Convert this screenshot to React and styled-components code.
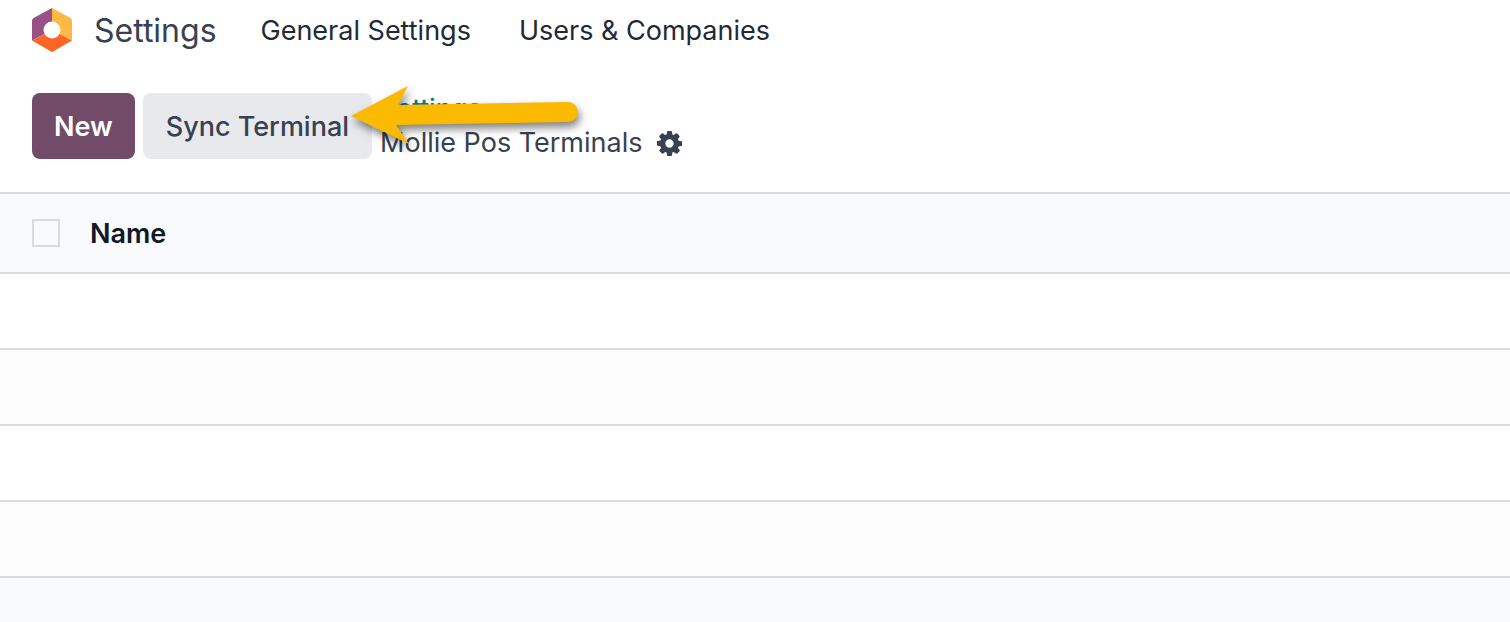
import styled, { createGlobalStyle } from "styled-components";
import { useState } from "react";

const ROWS = [1, 2, 3, 4];

export default function App() {
    const [checked, setChecked] = useState(false);

    return (
        <Page>
            <GlobalStyle />
            <Navbar>
                <Brand href="#settings">
                    <Logo />
                    Settings
                </Brand>
                <Menu>
                    <NavLink href="#general">General Settings</NavLink>
                    <NavLink href="#users">Users &amp; Companies</NavLink>
                </Menu>
            </Navbar>
            <ControlPanel>
                <Button $primary>New</Button>
                <Button>Sync Terminal</Button>
                <Breadcrumb>
                    <BackLink href="#settings">Settings</BackLink>
                    <Current>
                        Mollie Pos Terminals
                        <CogButton aria-label="Actions"><Cog /></CogButton>
                    </Current>
                    <Arrow />
                </Breadcrumb>
            </ControlPanel>
            <List>
                <thead>
                    <tr>
                        <SelectHead>
                            <Checkbox
                                type="checkbox"
                                aria-label="Select all"
                                checked={checked}
                                onChange={(e) => { setChecked(e.target.checked) }}
                            />
                        </SelectHead>
                        <NameHead>Name</NameHead>
                    </tr>
                </thead>
                <tbody>
                    {ROWS.map((row) => (
                        <Row key={row}>
                            <td></td>
                            <td></td>
                        </Row>
                    ))}
                </tbody>
            </List>
        </Page>
    );
}

function Logo() {
    return (
        <svg width="40" height="44" viewBox="0 0 40 44" aria-hidden="true">
            <path d="M20 0L1.500 10Q0 11 0 12.500V32.500L20 22Z" fill="#985184" />
            <path d="M20 0L38.500 10Q40 11 40 12.500V32.500L20 22Z" fill="#fbb945" />
            <path d="M0 32.500L20 22L40 32.500L21.500 43.300Q20 44.300 18.500 43.300Z" fill="#fc6526" />
            <circle cx="20" cy="22" r="8.500" fill="#fff" />
        </svg>
    );
}

function Cog() {
    return (
        <svg width="25" height="25" viewBox="0 128 1536 1536" fill="currentColor" aria-hidden="true">
            <path d="M1024 896q0-106-75-181t-181-75-181 75-75 181 75 181 181 75 181-75 75-181zm512-109v222q0 12-8 23t-20 13l-185 28q-19 54-39 91 35 50 107 138 10 12 10 25t-9 23q-27 37-99 108t-94 71q-12 0-26-9l-138-108q-44 23-91 38-16 136-29 186-7 28-36 28h-222q-14 0-24.500-8.500t-11.500-21.500l-28-184q-49-16-90-37l-141 107q-10 9-25 9-14 0-25-11-126-114-165-168-7-10-7-23 0-12 8-23 15-21 51-66.500t54-70.500q-27-50-41-99l-183-27q-13-2-21-12.500t-8-23.500v-222q0-12 8-23t19-13l186-28q14-46 39-92-40-57-107-138-10-12-10-24 0-10 9-23 26-36 98.500-107.500t94.500-71.500q13 0 26 10l138 107q44-23 91-38 16-136 29-186 7-28 36-28h222q14 0 24.500 8.500t11.500 21.500l28 184q49 16 90 37l142-107q9-9 24-9 13 0 25 10 129 119 165 170 7 8 7 22 0 12-8 23-15 21-51 66.500t-54 70.500q26 50 41 98l183 28q13 2 21 12.500t8 23.500z" />
        </svg>
    );
}

function Arrow() {
    return (
        <ArrowSvg width="250" height="84" viewBox="0 0 250 84" aria-hidden="true">
            <path
                d="M11 40L68 10L58 29L228 26A10 10 0 0 1 228 46L56 49L69 68Z"
                fill="#fbb900"
            />
        </ArrowSvg>
    );
}

const GlobalStyle = createGlobalStyle`
    * {
        box-sizing: border-box;
    }

    body {
        margin: 0;
        background: #f9fafc;
        font-family: Inter, 'Liberation Sans', sans-serif;
        font-size: 27px;
        color: #1f2937;
    }

    a {
        color: inherit;
        text-decoration: none;
    }
`;

const Page = styled.div`
    background: #fff;
`;

const Navbar = styled.nav`
    display: flex;
    align-items: center;
    height: 60px;
    padding: 0 32px;
    gap: 44px;
`;

const Brand = styled.a`
    display: flex;
    align-items: center;
    gap: 22px;
    font-size: 32px;
    && {
        color: #374151;
    }
`;

const Menu = styled.div`
    display: flex;
    gap: 48px;
`;

const NavLink = styled.a`
    white-space: nowrap;
`;

const ControlPanel = styled.div`
    display: flex;
    align-items: center;
    gap: 8px;
    height: 132px;
    padding: 0 32px;
`;

const Button = styled.button`
    height: 66px;
    padding: 0 ${(props) => (props.$primary ? "22px" : "23px")};
    border: none;
    border-radius: 8px;
    background: ${(props) => (props.$primary ? "#714b67" : "#e7e9ed")};
    color: ${(props) => (props.$primary ? "#fff" : "#374151")};
    font-family: inherit;
    font-size: 27px;
    font-weight: ${(props) => (props.$primary ? 600 : 500)};
    white-space: nowrap;
`;

const Breadcrumb = styled.div`
    position: relative;
    display: flex;
    flex-direction: column;
    align-items: flex-start;
    padding-top: 2px;
    white-space: nowrap;
`;

const BackLink = styled.a`
    font-size: 26px;
    font-weight: 500;
    line-height: 32px;
    && {
        color: #017e84;
    }
`;

const Current = styled.div`
    display: flex;
    align-items: center;
    gap: 15px;
    line-height: 36px;
    color: #374151;
`;

const CogButton = styled.button`
    display: flex;
    padding: 0;
    border: none;
    background: none;
    color: #374151;
`;

const ArrowSvg = styled.svg`
    position: absolute;
    top: -15px;
    left: -40px;
    filter: drop-shadow(2px 5px 4px rgba(0, 0, 0, 0.5));
    pointer-events: none;
`;

const List = styled.table`
    width: 100%;
    border-collapse: separate;
    border-spacing: 0;
    border-top: 2px solid #d8dadd;

    th, td {
        padding: 0;
        border-bottom: 2px solid #d8dadd;
    }

    th {
        height: 80px;
        background: #f9fafc;
        text-align: left;
        vertical-align: middle;
    }
`;

const SelectHead = styled.th`
    width: 90px;
`;

const NameHead = styled.th`
    color: #111827;
    font-weight: 600;
`;

const Checkbox = styled.input`
    appearance: none;
    display: block;
    width: 28px;
    height: 28px;
    margin: 0 0 0 32px;
    border: 2px solid #d8dadd;
    background: ${(props) => (props.checked ? "#714b67" : "transparent")};
`;

const Row = styled.tr`
    height: 76px;

    &:nth-child(even) {
        background: #fcfcfc;
    }
`;
